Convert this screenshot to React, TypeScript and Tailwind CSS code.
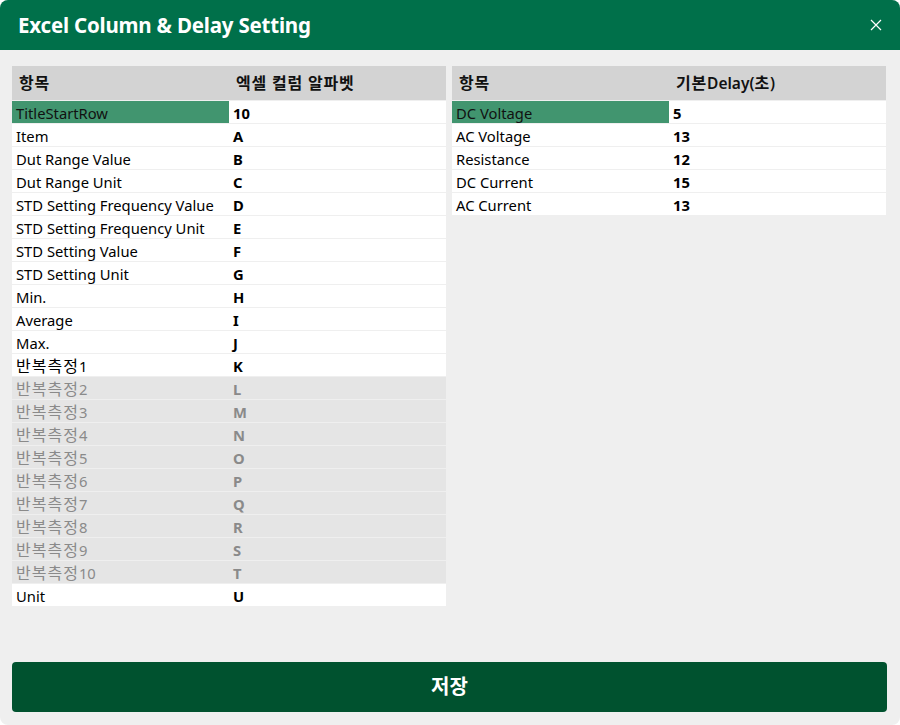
import React from "react";

type Row = { name: string; value: string; disabled?: boolean; selected?: boolean };

const leftRows: Row[] = [
  { name: "TitleStartRow", value: "10", selected: true },
  { name: "Item", value: "A" },
  { name: "Dut Range Value", value: "B" },
  { name: "Dut Range Unit", value: "C" },
  { name: "STD Setting Frequency Value", value: "D" },
  { name: "STD Setting Frequency Unit", value: "E" },
  { name: "STD Setting Value", value: "F" },
  { name: "STD Setting Unit", value: "G" },
  { name: "Min.", value: "H" },
  { name: "Average", value: "I" },
  { name: "Max.", value: "J" },
  { name: "반복측정1", value: "K" },
  { name: "반복측정2", value: "L", disabled: true },
  { name: "반복측정3", value: "M", disabled: true },
  { name: "반복측정4", value: "N", disabled: true },
  { name: "반복측정5", value: "O", disabled: true },
  { name: "반복측정6", value: "P", disabled: true },
  { name: "반복측정7", value: "Q", disabled: true },
  { name: "반복측정8", value: "R", disabled: true },
  { name: "반복측정9", value: "S", disabled: true },
  { name: "반복측정10", value: "T", disabled: true },
  { name: "Unit", value: "U" },
];

const rightRows: Row[] = [
  { name: "DC Voltage", value: "5", selected: true },
  { name: "AC Voltage", value: "13" },
  { name: "Resistance", value: "12" },
  { name: "DC Current", value: "15" },
  { name: "AC Current", value: "13" },
];

function K({ text, cls }: { text: string; cls: string }) {
  const parts = text.split(/([\uAC00-\uD7A3 ]*[\uAC00-\uD7A3]+)/).filter((p) => p.length > 0);
  return (
    <>
      {parts.map((p, i) =>
        /[\uAC00-\uD7A3]/.test(p) ? (
          <span key={i} className={cls}>
            {p}
          </span>
        ) : (
          <span key={i}>{p}</span>
        )
      )}
    </>
  );
}

function Table({ header, rows }: { header: [string, string]; rows: Row[] }) {
  return (
    <div className="w-[434px] flex flex-col gap-px self-start">
      <div className="h-[34px] flex items-center bg-[#d3d3d3] text-[15.5px] font-semibold text-[#111] pt-[1px]">
        <div className="w-[217px] pl-[7px]">
          <K text={header[0]} cls="text-[16px] tracking-[0.8px]" />
        </div>
        <div className="flex-1 pl-[7px]">
          <K text={header[1]} cls="text-[16px] tracking-[0.8px]" />
        </div>
      </div>
      {rows.map((r, i) => (
        <div
          key={i}
          className={
            "h-[22px] flex items-center text-[14.75px] leading-[22px] " +
            (r.disabled ? "bg-[#e5e5e5] text-[#8a8a8a]" : "bg-white text-[#000]")
          }
        >
          <div
            className={
              "w-[217px] h-full flex items-center pl-[4px] pt-[2px] " +
              (r.selected ? "bg-[#41956f] text-[#111]" : "")
            }
          >
            <span>
              <K text={r.name} cls="text-[16px] tracking-[1px]" />
            </span>
          </div>
          <div className="flex-1 h-full flex items-center pl-[4px] pt-[2px] font-bold">{r.value}</div>
        </div>
      ))}
    </div>
  );
}

export default function App() {
  return (
    <div
      className="w-[900px] h-[725px] bg-white"
      style={{ fontFamily: '"Noto Sans", "Noto Sans CJK KR", sans-serif' }}
    >
      <div className="w-full h-full rounded-lg overflow-hidden bg-[#efefef] flex flex-col">
        <div className="h-[50px] bg-[#00704a] flex items-center justify-between pl-[18px] pr-[16px]">
          <div className="text-white text-[20.5px] font-bold tracking-[-0.2px]">Excel Column &amp; Delay Setting</div>
          <svg width="12" height="12" viewBox="0 0 12 12" className="mr-[2px]">
            <path d="M1 1 L11 11 M11 1 L1 11" stroke="white" strokeWidth="1.2" fill="none" />
          </svg>
        </div>
        <div className="flex gap-[6px] pl-3 pt-4">
          <Table header={["항목", "엑셀 컬럼 알파벳"]} rows={leftRows} />
          <Table header={["항목", "기본Delay(초)"]} rows={rightRows} />
        </div>
        <div className="mt-auto px-3 pb-[13px]">
          <button className="w-[875px] h-[50px] rounded bg-[#00522f] text-white text-[20px] font-semibold flex items-center justify-center">
            저장
          </button>
        </div>
      </div>
    </div>
  );
}
